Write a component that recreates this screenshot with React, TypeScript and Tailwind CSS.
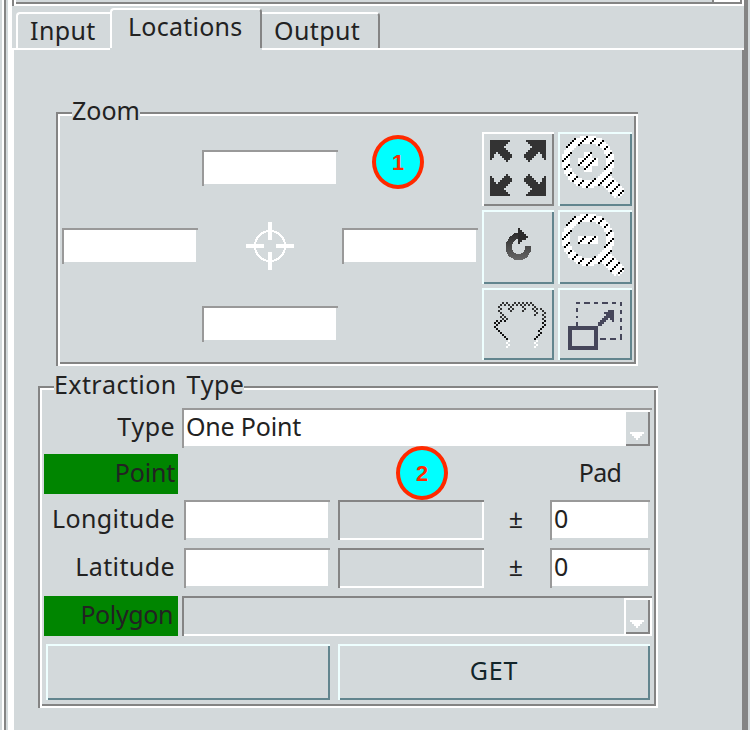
import React from "react";

const FONT = "font-['Noto_Sans','Open_Sans',sans-serif] [font-kerning:none]";

const etched =
  "shadow-[inset_2px_2px_0_#848484,inset_-2px_-2px_0_#fff,inset_4px_4px_0_#fff,inset_-4px_-4px_0_#848484]";
const raisedTeal = "shadow-[inset_2px_2px_0_#eeffff,inset_-2px_-2px_0_#62858e]";
const raisedGray = "shadow-[inset_2px_2px_0_#fff,inset_-2px_-2px_0_#848484]";
const fieldEdge = "bg-white shadow-[inset_2px_2px_0_#999,inset_-2px_-2px_0_#d3d9db]";
const disabledEdge = "shadow-[inset_2px_2px_0_#848484,inset_-2px_-2px_0_#fff]";

function Field({ className = "", children }: { className?: string; children?: React.ReactNode }) {
  return <div className={`${fieldEdge} ${className}`}>{children}</div>;
}

function Legend({ className, children }: { className: string; children: React.ReactNode }) {
  return <div className={`absolute whitespace-nowrap bg-[#d3d9db] leading-6 ${className}`}>{children}</div>;
}

function Marker({ className, children }: { className: string; children: React.ReactNode }) {
  return (
    <div
      className={`absolute flex h-[54px] w-[52px] items-center justify-center rounded-[50%] border-4 border-[#ff2a00] bg-[#00ffff] font-['Liberation_Sans',sans-serif] text-[22px] font-bold text-[#ff2a00] ${className}`}
    >
      {children}
    </div>
  );
}

function ExpandIcon() {
  const d = "M0 0H20V2H18V4H16V6H14V8H16V10H18V12H20V14H22V18H20V20H18V22H16V20H14V18H12V16H10V14H8V12H6V14H4V18H2V20H0Z";
  return (
    <svg width="56" height="56" viewBox="0 0 56 56" fill="#333" shapeRendering="crispEdges">
      <path d={d} />
      <path d={d} transform="translate(56 0) scale(-1 1)" />
      <path d={d} transform="translate(0 56) scale(1 -1)" />
      <path d={d} transform="translate(56 56) scale(-1 -1)" />
    </svg>
  );
}

// Glass shapes on a 2px grid, filled with a diagonal stipple.
function MagnifierIcon({ plus = false }: { plus?: boolean }) {
  const cells: React.ReactNode[] = [];
  for (let r = 0; r < 37; r++) {
    for (let c = 0; c < 37; c++) {
      const x = c * 2 + 1;
      const y = r * 2 + 1;
      const dx = x - 30;
      const dy = y - 29.5;
      const dist = Math.hypot(dx, dy);
      const ring = dist <= 26 && dist >= 18.5;
      const along = (dx + dy) / Math.SQRT2;
      const across = Math.abs(dx - dy) / Math.SQRT2;
      const handle = along > 22 && along < 48 && across < (along > 45 ? 4 : 6.5);
      const minus = Math.abs(dx) < 11 && Math.abs(dy) < 4;
      const stem = plus && Math.abs(dx) < 5 && Math.abs(dy) < 10;
      if (ring || handle || minus || stem) {
        cells.push(
          <rect key={`${r}-${c}`} x={c * 2} y={r * 2} width="2" height="2" fill={(r + c) % 5 === 1 ? "#000" : "#fff"} />
        );
      }
    }
  }
  return (
    <svg width="74" height="74" viewBox="0 0 74 74" shapeRendering="crispEdges">
      {cells}
    </svg>
  );
}

function RefreshIcon() {
  return (
    <svg width="72" height="74" viewBox="0 0 72 74">
      <defs>
        <linearGradient id="turn" x1="0" y1="18" x2="0" y2="50" gradientUnits="userSpaceOnUse">
          <stop offset="0" stopColor="#222" />
          <stop offset="1" stopColor="#666" />
        </linearGradient>
      </defs>
      <path d="M46 36V40L43 45L39 47H34L29 44L27 40V34L30 29L34 26H40" fill="none" stroke="url(#turn)" strokeWidth="6" shapeRendering="crispEdges" />
      <path d="M36 18H38V20H40V22H42V24H44V26H46V28H44V30H40V32H38V34H36Z" fill="#2b2b2b" shapeRendering="crispEdges" />
    </svg>
  );
}

const HAND: number[][] = [
  [4, 6, 10, 12, 14, 16, 18],
  [3, 5, 7, 9, 11, 13, 15, 17, 19],
  [2, 8, 14, 20],
  [3, 7, 9, 15, 19, 21, 23],
  [2, 8, 14, 20, 24],
  [3, 21, 25],
  [4, 20, 24],
  [3, 5, 25],
  [4, 6, 24],
  [1, 3, 5, 25],
  [0, 2, 24],
  [1, 25],
  [0, 24],
  [1, 23],
  [2, 22],
  [3, 23],
  [4, 22],
  [5, 21],
  [6, 20],
];
const HAND_WHITE: number[][] = [
  [7, 21],
  [6, 20],
  [7, 21],
  [6, 20],
];

function HandIcon() {
  return (
    <svg width="72" height="72" viewBox="0 0 72 72" shapeRendering="crispEdges">
      {HAND.map((cols, r) =>
        cols.map((c) => <rect key={`${r}-${c}`} x={12 + c * 2} y={14 + r * 2} width="2" height="2" fill={r < 9 ? "#333" : "#111"} />)
      )}
      {HAND_WHITE.map((cols, r) =>
        cols.map((c) => <rect key={`w${r}-${c}`} x={12 + c * 2} y={52 + r * 2} width="2" height="2" fill="#fff" />)
      )}
    </svg>
  );
}

function ResizeIcon() {
  return (
    <svg width="74" height="72" viewBox="0 0 74 72" fill="none" stroke="#45465a" shapeRendering="crispEdges">
      <path d="M18 15H64" strokeWidth="2" strokeDasharray="4 4 6 4" />
      <path d="M19 14V38" strokeWidth="2" strokeDasharray="2 4 4 4" />
      <path d="M63 14V52" strokeWidth="2" strokeDasharray="4 4" />
      <path d="M42 51H64" strokeWidth="2" strokeDasharray="6 4" />
      <rect x="12" y="40" width="26" height="20" strokeWidth="4" />
      <path d="M40 34H42V32H44V30H46V28H48V26H46V24H50V22H56V34H54V32H52V30H50V32H48V34H46V36H44V38H40Z" fill="#45465a" stroke="none" />
    </svg>
  );
}

function Crosshair() {
  return (
    <svg width="48" height="48" viewBox="0 0 48 48" fill="none" stroke="#fff" shapeRendering="crispEdges">
      <circle cx="24" cy="24" r="15" strokeWidth="2" />
      <path d="M24 0V18M24 30V48M0 24H18M30 24H48" strokeWidth="4" />
    </svg>
  );
}

function DropArrow() {
  return (
    <svg width="14" height="8" viewBox="0 0 14 8" fill="#fff" shapeRendering="crispEdges">
      <path d="M0 0H14V2H12V4H10V6H8V8H6V6H4V4H2V2H0Z" />
    </svg>
  );
}

function CoordinateRow({ label, className }: { label: string; className: string }) {
  return (
    <div className={`flex h-10 ${className}`}>
      <div className="w-[134px] pr-[3px] text-right leading-9 tracking-[0.4px]">{label}</div>
      <Field className="ml-1.5 w-[146px]" />
      <div className={`ml-2 w-[146px] ${disabledEdge}`} />
      <div className="w-[66px] pr-0.5 text-center leading-9">±</div>
      <Field className="w-[100px] pl-1 leading-9">0</Field>
    </div>
  );
}

export default function App() {
  return (
    <div className={`flex h-[730px] w-[750px] overflow-hidden bg-[#d3d9db] text-[25px] text-[#222] ${FONT}`}>
      <div className="w-0.5" />
      <div className="w-0.5 bg-white" />
      <div className="w-0.5 bg-[#848484]" />
      <div className="w-0.5" />
      <div className="w-1 bg-white" />

      <div className="flex w-[732px] flex-col">
        <div className="flex h-1.5">
          <div className="w-0.5 bg-[#848484]" />
          <div className="flex-1 border-x-2 border-b-2 border-white">
            <div className="flex h-1 justify-end border-b-2 border-[#848484]">
              <div className="w-[30px] border-x-2 border-[#848484] bg-white" />
            </div>
          </div>
        </div>

        <div className="flex h-11 items-end leading-6">
          <div className="h-0.5 w-1 bg-white" />
          <div className="h-[38px] w-[94px] rounded-tl-[4px] border-b-2 border-l-2 border-t-2 border-white pl-3 pt-1 tracking-[0.4px]">Input</div>
          <div className="mb-0.5 h-10 w-[152px] rounded-t-[4px] border-x-2 border-t-2 border-l-white border-r-[#848484] border-t-white pl-4 pt-1 tracking-[0.25px]">
            Locations
          </div>
          <div className="flex h-[38px] w-[118px] flex-col">
            <div className="h-9 rounded-tr-[4px] border-r-2 border-t-2 border-r-[#848484] border-t-white pl-3 pt-1 tracking-[0.4px]">Output</div>
            <div className="h-0.5 bg-white" />
          </div>
          <div className="h-0.5 flex-1 bg-white" />
        </div>

        <div className="flex-1 border-l-2 border-r-2 border-l-white border-r-[#848484]">
          <section className={`relative ml-[42px] mt-[62px] flex h-[254px] w-[582px] pl-1.5 pt-5 ${etched}`}>
            <Legend className="left-4 top-[-14px] w-[68px]">Zoom</Legend>
            <div className="mt-[18px] grid h-[192px] grid-cols-[136px_136px_136px] grid-rows-[36px_36px_36px] gap-x-1 gap-y-[42px]">
              <Field className="col-start-2" />
              <Field className="col-start-1 row-start-2" />
              <div className="col-start-2 row-start-2 flex items-center justify-center">
                <Crosshair />
              </div>
              <Field className="col-start-3 row-start-2" />
              <Field className="col-start-2 row-start-3" />
            </div>
            <div className="ml-1 grid h-[228px] grid-cols-[72px_74px] grid-rows-[74px_74px_72px] gap-1">
              <button className={`pl-2 pt-2 ${raisedGray} flex items-start`}>
                <ExpandIcon />
              </button>
              <button className={raisedTeal}>
                <MagnifierIcon plus />
              </button>
              <button className={raisedTeal}>
                <RefreshIcon />
              </button>
              <button className={raisedTeal}>
                <MagnifierIcon />
              </button>
              <button className={raisedTeal}>
                <HandIcon />
              </button>
              <button className={raisedTeal}>
                <ResizeIcon />
              </button>
            </div>
            <Marker className="left-[316px] top-[23px]">1</Marker>
          </section>

          <section className={`relative ml-6 mt-5 h-[322px] w-[620px] pl-1.5 pt-[22px] ${etched}`}>
            <Legend className="left-4 top-[-14px] w-[190px] tracking-[0.4px] [word-spacing:3px]">Extraction Type</Legend>
            <div className="flex h-10">
              <div className="w-[134px] pr-[3px] text-right leading-9 tracking-[0.4px]">Type</div>
              <Field className="ml-1 flex w-[470px] justify-between pl-1 leading-9">
                <span className="tracking-[-0.2px]">One Point</span>
                <div className="mr-0.5 mt-1 flex h-[34px] w-6 items-end bg-[#d3d9db] pb-1.5 pl-1 shadow-[inset_-2px_-2px_0_#848484]">
                  <DropArrow />
                </div>
              </Field>
            </div>
            <div className="mt-1.5 flex h-10 leading-9">
              <div className="w-[134px] bg-[#008500] pr-[3px] text-right tracking-[-0.2px]">Point</div>
              <div className="ml-[372px] w-[100px] text-center tracking-[-0.7px]">Pad</div>
            </div>
            <CoordinateRow label="Longitude" className="mt-1.5" />
            <CoordinateRow label="Latitude" className="mt-2" />
            <div className="mt-2 flex h-10">
              <div className="w-[134px] bg-[#008500] pr-[5px] text-right leading-9 tracking-[-0.4px]">Polygon</div>
              <div className={`ml-1 flex w-[470px] justify-end pr-0.5 pt-0.5 ${disabledEdge}`}>
                <div className="flex h-9 w-[26px] items-end pb-1.5 pl-1.5 shadow-[inset_2px_2px_0_#fff,inset_-2px_-2px_0_#848484]">
                  <DropArrow />
                </div>
              </div>
            </div>
            <div className="ml-0.5 mt-2 flex h-14">
              <button className={`w-[284px] ${raisedTeal}`} />
              <button className={`ml-2 w-[312px] pb-0.5 text-center tracking-[0.8px] text-[#12252a] ${raisedTeal}`}>GET</button>
            </div>
            <Marker className="left-[358px] top-[60px]">2</Marker>
          </section>
        </div>
      </div>
      <div className="w-1 bg-[#848484]" />
      <div className="w-0.5" />
    </div>
  );
}
